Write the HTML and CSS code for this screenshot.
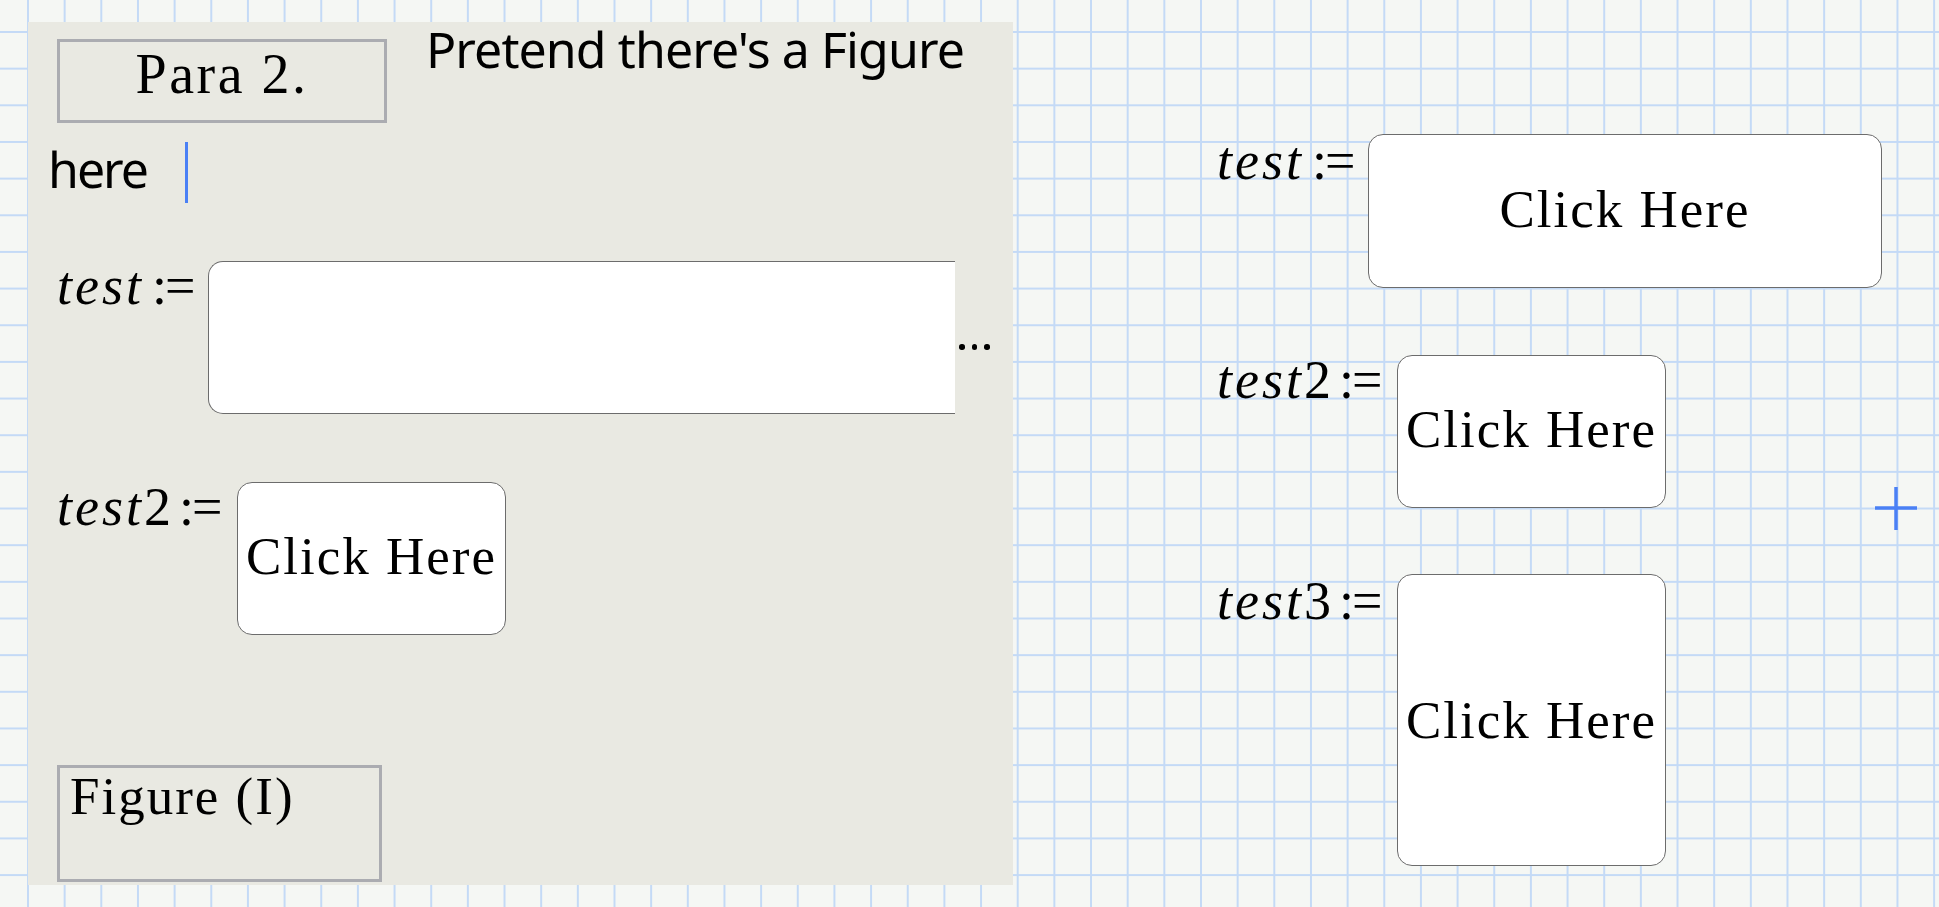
FILE: index.html
```html
<!DOCTYPE html>
<html lang="en">
<head>
<meta charset="utf-8">
<title>Worksheet</title>
<link rel="stylesheet" href="styles.css">
</head>
<body>
<div class="sheet">
  <section class="panel">
    <div class="head-row">
      <div class="para-box">Para 2.</div>
      <div class="note">Pretend there's a Figure</div>
    </div>
    <div class="here-row">
      <span class="here">here</span>
      <span class="caret"></span>
    </div>
    <div class="def-row def-first">
      <div class="label label-w1"><i>test</i><span class="op">:=</span></div>
      <div class="btn btn-clipped"></div>
      <div class="dots"><span></span><span></span><span></span></div>
    </div>
    <div class="def-row def-second">
      <div class="label label-w2"><i>test</i>2<span class="op">:=</span></div>
      <div class="btn btn-small">Click Here</div>
    </div>
    <div class="fig-box">Figure (I)</div>
  </section>

  <section class="col">
    <div class="def-row r1">
      <div class="label label-w1"><i>test</i><span class="op">:=</span></div>
      <div class="btn btn-wide">Click Here</div>
    </div>
    <div class="def-row r2">
      <div class="label label-w2 lab-up"><i>test</i>2<span class="op">:=</span></div>
      <div class="btn btn-small">Click Here</div>
    </div>
    <div class="def-row r3">
      <div class="label label-w2"><i>test</i>3<span class="op">:=</span></div>
      <div class="btn btn-tall">Click Here</div>
    </div>
  </section>
</div>
<svg class="cross" width="42" height="43" viewBox="0 0 42 43">
  <line x1="21" y1="0" x2="21" y2="43" stroke="#4a80f5" stroke-width="3.5"/>
  <line x1="0" y1="21" x2="42" y2="21" stroke="#4a80f5" stroke-width="3.5"/>
</svg>
</body>
</html>
```

FILE: styles.css
```css
html, body {
  margin: 0;
  padding: 0;
}
body {
  width: 1939px;
  height: 907px;
  overflow: hidden;
  position: relative;
  background-color: #f5f7f4;
  background-image:
    linear-gradient(to right, #c4daf6 2px, transparent 2px),
    linear-gradient(to bottom, #c4daf6 2px, transparent 2px);
  background-size: 36.67px 36.67px;
  background-position: 27px 31px;
  color: #000;
  font-family: "Liberation Serif", "Times New Roman", serif;
}
.sheet {
  display: flex;
  align-items: flex-start;
  padding: 22px 0 0 28px;
}
.panel {
  width: 985px;
  height: 863px;
  box-sizing: border-box;
  background: #e9e9e2;
  display: flex;
  flex-direction: column;
  align-items: flex-start;
}
.head-row {
  display: flex;
  align-items: flex-start;
}
.para-box {
  margin: 17px 0 0 29px;
  width: 330px;
  height: 84px;
  box-sizing: border-box;
  border: 3px solid #abacb1;
  padding-top: 4px;
  font-size: 56px;
  line-height: 1;
  letter-spacing: 2.5px;
  text-align: center;
}
.note {
  margin: 2px 0 0 39px;
  font-family: "Noto Sans", "Open Sans", sans-serif;
  font-size: 50px;
  line-height: 1;
  letter-spacing: -0.9px;
  white-space: nowrap;
}
.here-row {
  display: flex;
  align-items: flex-start;
  margin-top: 19px;
}
.here {
  display: inline-block;
  width: 137px;
  margin: 2px 0 0 20px;
  font-family: "Noto Sans", "Open Sans", sans-serif;
  font-size: 50px;
  line-height: 1;
  letter-spacing: -2px;
}
.caret {
  width: 3px;
  height: 61px;
  background: #4a80f5;
}
.def-row {
  display: flex;
  align-items: flex-start;
}
.def-first { margin-top: 58px; }
.def-second { margin-top: 68px; }
.panel .label { margin-left: 29px; }
.label {
  font-size: 54px;
  line-height: 1;
  margin-top: -2px;
  white-space: nowrap;
}
.label i {
  letter-spacing: 3px;
}
.label .op {
  margin-left: 8px;
  letter-spacing: -2px;
}
.label-w1 { width: 151px; flex: none; }
.label-w2 { width: 180px; flex: none; }
.btn {
  box-sizing: border-box;
  background: #fff;
  border: 1.5px solid #6c6c6c;
  border-radius: 15px;
  display: flex;
  align-items: center;
  justify-content: center;
  font-size: 53px;
  line-height: 1;
  letter-spacing: 2px;
  white-space: nowrap;
  padding-bottom: 4px;
}
.btn-clipped {
  width: 747px;
  height: 153px;
  border-right: none;
  border-radius: 15px 0 0 15px;
}
.btn-small {
  width: 269px;
  height: 153px;
}
.btn-wide {
  width: 514px;
  height: 154px;
}
.btn-tall {
  width: 269px;
  height: 292px;
  padding-bottom: 0;
}
.dots {
  display: flex;
  gap: 7px;
  margin: 83px 0 0 4px;
}
.dots span {
  width: 5.5px;
  height: 5.5px;
  border-radius: 50%;
  background: #000;
}
.fig-box {
  margin: 130px 0 0 29px;
  width: 325px;
  height: 117px;
  box-sizing: border-box;
  border: 3px solid #abacb1;
  padding: 2px 0 0 10px;
  font-size: 53px;
  line-height: 1;
  letter-spacing: 2px;
}
.col {
  margin-left: 204px;
  padding-top: 112px;
  display: flex;
  flex-direction: column;
}
.col .label { margin-top: 0; }
.col .lab-up { margin-top: -2px; }
.r2 { margin-top: 67px; }
.r3 { margin-top: 66px; }
.cross {
  position: absolute;
  left: 1875px;
  top: 487px;
}
```
